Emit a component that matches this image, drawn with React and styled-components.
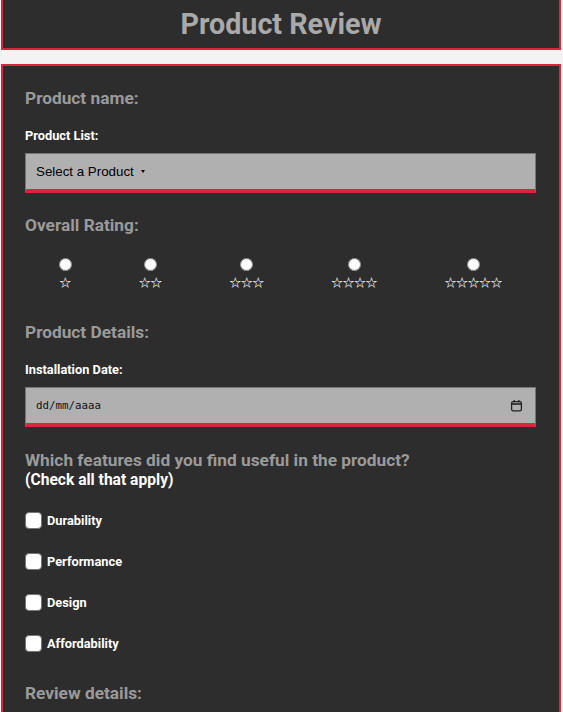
import React from "react";
import styled, { createGlobalStyle } from "styled-components";

const red = "#d7263d";
const panel = "#2d2d2d";

const GlobalStyle = createGlobalStyle`
  body {
    margin: 0;
    background-color: #f3f3f3;
    font-family: Roboto, "Liberation Sans", sans-serif;
  }
`;

const Page = styled.div`
  padding: 0 2px 0 1px;
`;

const Header = styled.header`
  height: 48px;
  background-color: ${panel};
  border: 2px solid ${red};
  border-top: none;
  display: flex;
  justify-content: center;
  align-items: center;
`;

const Title = styled.h1`
  margin: 0;
  font-size: 28.7px;
  font-weight: 700;
  color: #a9a9a9;
`;

const Form = styled.form`
  margin-top: 14px;
  background-color: ${panel};
  border: 2px solid ${red};
  padding: 22px 23px 40px 22px;
  display: flex;
  flex-direction: column;
`;

const SectionTitle = styled.h2`
  margin: ${(props) => props.top || 0}px 0 0 0;
  font-size: 17.3px;
  line-height: 20px;
  font-weight: 700;
  color: #9a9a9a;
`;

const Note = styled.span`
  display: block;
  font-size: 15.6px;
  color: #ffffff;
`;

const FieldLabel = styled.label`
  display: block;
  margin-top: 20px;
  font-size: 12.8px;
  line-height: 16px;
  font-weight: 700;
  color: #ffffff;
`;

const Field = styled.div`
  margin-top: 9px;
  height: 35px;
  box-sizing: content-box;
  background-color: #b0b0b0;
  border: 1px solid #767676;
  border-bottom: 4px solid ${red};
  display: flex;
  align-items: center;
  padding: 0 12px 0 10px;
`;

const Select = styled.select`
  appearance: none;
  border: none;
  background: transparent;
  font-family: "Liberation Sans", Arial, sans-serif;
  font-size: 13.33px;
  color: #000;
  padding: 0;
  outline: none;
`;

const Caret = styled.span`
  margin-left: 7px;
  width: 0;
  height: 0;
  border-left: 2.5px solid transparent;
  border-right: 2.5px solid transparent;
  border-top: 3px solid #000;
`;

const DateInput = styled.input`
  flex: 1;
  border: none;
  background: transparent;
  font-family: "DejaVu Sans Mono", "Liberation Mono", monospace;
  font-size: 10.8px;
  color: #000;
  padding: 0;
  outline: none;
  &::placeholder {
    color: #111;
  }
`;

const RatingRow = styled.div`
  margin-top: 23px;
  display: flex;
  justify-content: space-around;
`;

const RatingOption = styled.label`
  display: flex;
  flex-direction: column;
  align-items: center;
`;

const Radio = styled.input`
  margin: 0;
  width: 13px;
  height: 13px;
`;

const Stars = styled.span`
  margin-top: 4px;
  font-family: "Noto Sans CJK JP", "DejaVu Sans", sans-serif;
  font-size: 11.5px;
  font-weight: 700;
  line-height: 14px;
  color: #ffffff;
`;

const CheckList = styled.div`
  margin-top: 22px;
  display: flex;
  flex-direction: column;
  gap: 24px;
`;

const CheckRow = styled.label`
  display: flex;
  align-items: center;
  gap: 5px;
  font-size: 12.8px;
  font-weight: 700;
  color: #ffffff;
`;

const Checkbox = styled.input`
  appearance: none;
  margin: 0;
  width: 17px;
  height: 17px;
  box-sizing: border-box;
  background-color: #ffffff;
  border: 1.5px solid #767676;
  border-radius: 4px;
`;

function CalendarIcon() {
  return (
    <svg width="13" height="13" viewBox="0 0 13 13" fill="none">
      <rect x="1.6" y="2.6" width="9.8" height="9.2" rx="1.6" stroke="#222" strokeWidth="1.3" />
      <line x1="1.6" y1="5" x2="11.4" y2="5" stroke="#222" strokeWidth="1.6" />
      <line x1="4.2" y1="1" x2="4.2" y2="3.2" stroke="#222" strokeWidth="1.3" />
      <line x1="8.8" y1="1" x2="8.8" y2="3.2" stroke="#222" strokeWidth="1.3" />
    </svg>
  );
}

const ratings = ["☆", "☆☆", "☆☆☆", "☆☆☆☆", "☆☆☆☆☆"];
const features = ["Durability", "Performance", "Design", "Affordability"];

export default function App() {
  return (
    <Page>
      <GlobalStyle />
      <Header>
        <Title>Product Review</Title>
      </Header>
      <Form>
        <SectionTitle>Product name:</SectionTitle>
        <FieldLabel htmlFor="product">Product List:</FieldLabel>
        <Field>
          <Select id="product" defaultValue="">
            <option value="">Select a Product</option>
          </Select>
          <Caret />
        </Field>

        <SectionTitle top={22}>Overall Rating:</SectionTitle>
        <RatingRow>
          {ratings.map((r, i) => (
            <RatingOption key={i}>
              <Radio type="radio" name="rating" value={i + 1} />
              <Stars>{r}</Stars>
            </RatingOption>
          ))}
        </RatingRow>

        <SectionTitle top={33}>Product Details:</SectionTitle>
        <FieldLabel htmlFor="date">Installation Date:</FieldLabel>
        <Field>
          <DateInput id="date" type="text" placeholder="dd/mm/aaaa" />
          <CalendarIcon />
        </Field>

        <SectionTitle top={23}>
          Which features did you find useful in the product?
          <Note>(Check all that apply)</Note>
        </SectionTitle>
        <CheckList>
          {features.map((f) => (
            <CheckRow key={f}>
              <Checkbox type="checkbox" />
              {f}
            </CheckRow>
          ))}
        </CheckList>

        <SectionTitle top={31}>Review details:</SectionTitle>
      </Form>
    </Page>
  );
}
